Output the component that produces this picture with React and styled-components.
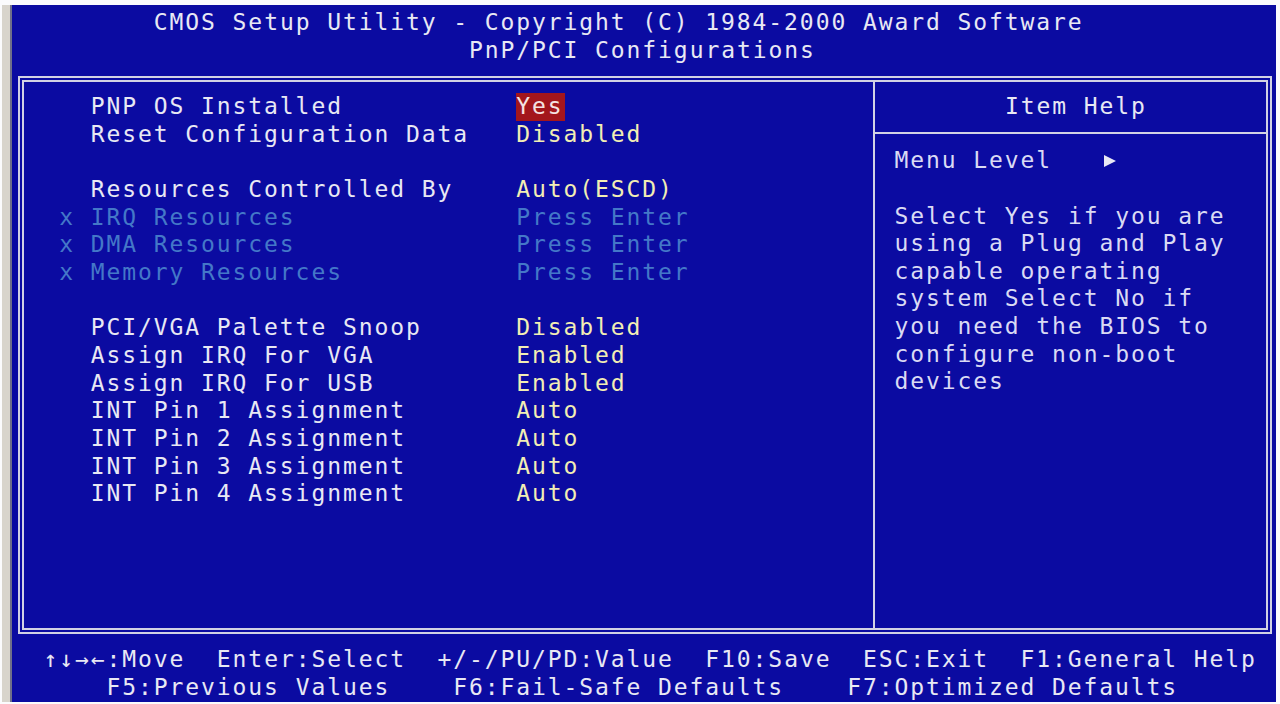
import React from 'react';
import styled, { createGlobalStyle } from 'styled-components';

// one character cell of the text-mode screen
const CH = 15.76;
const ROW = 27.64;
const FONT = 23;

const GlobalStyle = createGlobalStyle`
  html, body {
    margin: 0;
    padding: 0;
    background: #fbfbfd;
  }
  body {
    width: 1280px;
    height: 704px;
    overflow: hidden;
  }
`;

const Monitor = styled.div`
  width: 1280px;
  height: 704px;
  box-sizing: border-box;
  padding: 5px 4px 2px 10px;
`;

const Screen = styled.div`
  height: 100%;
  box-sizing: border-box;
  display: flex;
  flex-direction: column;
  background: #0b0ba1;
  color: #e8e8f4;
  border-left: 2px solid #70708a;
  box-shadow: -8px 0 0 #d8d4cc;
  font-family: "DejaVu Sans Mono", "Liberation Mono", monospace;
  font-size: ${FONT}px;
  letter-spacing: ${(CH - FONT * 0.6021).toFixed(2)}px;
  line-height: ${ROW}px;
  white-space: pre;
`;

const Header = styled.div`
  padding-top: 4px;
`;

const Line = styled.div`
  padding-left: ${p => p.col * CH}px;
`;

const Frame = styled.div`
  margin: 12px 4px 0 6px;
  height: 558px;
  box-sizing: border-box;
  border: 6px double #d2d2e4;
  display: grid;
  grid-template-columns: 849px 1fr;
`;

const Menu = styled.div`
  padding: 11px 0 0 ${3 * CH - 12}px;
`;

const Row = styled.div`
  display: grid;
  grid-template-columns: ${2 * CH}px ${27 * CH}px 1fr;
  color: ${p => (p.locked ? '#4478c8' : '#e8e8f4')};
`;

const Value = styled.span`
  color: ${p => (p.locked ? '#4478c8' : '#f2eeb4')};
`;

const Picked = styled.span`
  display: inline-block;
  background: #a3161c;
  color: #f4e2e2;
  padding-right: 1px;
`;

const Blank = styled.div`
  height: ${ROW}px;
`;

const Help = styled.div`
  border-left: 2px solid #d2d2e4;
  display: flex;
  flex-direction: column;
  color: #dadaf4;
`;

const HelpHead = styled.div`
  height: 52px;
  padding: 11px 0 0 ${63 * CH + 12 - 875}px;
  box-sizing: border-box;
  border-bottom: 2px solid #d2d2e4;
  color: #e8e8f4;
`;

const HelpBody = styled.div`
  padding: 13px 0 0 ${56 * CH + 12 - 875}px;
`;

const HelpText = styled.div`
  width: 346px;
  white-space: normal;
`;

const LevelRow = styled.div`
  display: flex;
  align-items: center;
  gap: ${3 * CH}px;
`;

const Pointer = styled.svg`
  width: 12px;
  height: 12px;
  margin-left: 5px;
  fill: #e8e8f4;
`;

const Footer = styled.div`
  margin-top: 12px;
`;

const Keys = styled.div`
  display: flex;
  gap: ${p => p.gap * CH}px;
  padding-left: ${p => p.col * CH}px;
`;

const items = [
  { label: 'PNP OS Installed', value: 'Yes', picked: true },
  { label: 'Reset Configuration Data', value: 'Disabled' },
  null,
  { label: 'Resources Controlled By', value: 'Auto(ESCD)' },
  { label: 'IRQ Resources', value: 'Press Enter', locked: true },
  { label: 'DMA Resources', value: 'Press Enter', locked: true },
  { label: 'Memory Resources', value: 'Press Enter', locked: true },
  null,
  { label: 'PCI/VGA Palette Snoop', value: 'Disabled' },
  { label: 'Assign IRQ For VGA', value: 'Enabled' },
  { label: 'Assign IRQ For USB', value: 'Enabled' },
  { label: 'INT Pin 1 Assignment', value: 'Auto' },
  { label: 'INT Pin 2 Assignment', value: 'Auto' },
  { label: 'INT Pin 3 Assignment', value: 'Auto' },
  { label: 'INT Pin 4 Assignment', value: 'Auto' },
];

const topKeys = ['\u2191\u2193\u2192\u2190:Move', 'Enter:Select', '+/-/PU/PD:Value', 'F10:Save', 'ESC:Exit', 'F1:General Help'];
const bottomKeys = ['F5:Previous Values', 'F6:Fail-Safe Defaults', 'F7:Optimized Defaults'];

export default function App() {
  return (
    <Monitor>
      <GlobalStyle />
      <Screen>
        <Header>
          <Line col={9}>CMOS Setup Utility - Copyright (C) 1984-2000 Award Software</Line>
          <Line col={29}>PnP/PCI Configurations</Line>
        </Header>
        <Frame>
          <Menu>
            {items.map((item, i) =>
              item ? (
                <Row key={i} locked={item.locked}>
                  <span>{item.locked ? 'x' : ''}</span>
                  <span>{item.label}</span>
                  {item.picked ? (
                    <span><Picked>{item.value}</Picked></span>
                  ) : (
                    <Value locked={item.locked}>{item.value}</Value>
                  )}
                </Row>
              ) : (
                <Blank key={i} />
              )
            )}
          </Menu>
          <Help>
            <HelpHead>Item Help</HelpHead>
            <HelpBody>
              <LevelRow>
                <span>Menu Level</span>
                <Pointer viewBox="0 0 12 12"><polygon points="0,0 12,6 0,12" /></Pointer>
              </LevelRow>
              <Blank />
              <HelpText>
                Select Yes if you are using a Plug and Play capable operating system Select No if you need the BIOS to configure non-boot devices
              </HelpText>
            </HelpBody>
          </Help>
        </Frame>
        <Footer>
          <Keys col={2} gap={2}>
            {topKeys.map(k => <span key={k}>{k}</span>)}
          </Keys>
          <Keys col={6} gap={4}>
            {bottomKeys.map(k => <span key={k}>{k}</span>)}
          </Keys>
        </Footer>
      </Screen>
    </Monitor>
  );
}
